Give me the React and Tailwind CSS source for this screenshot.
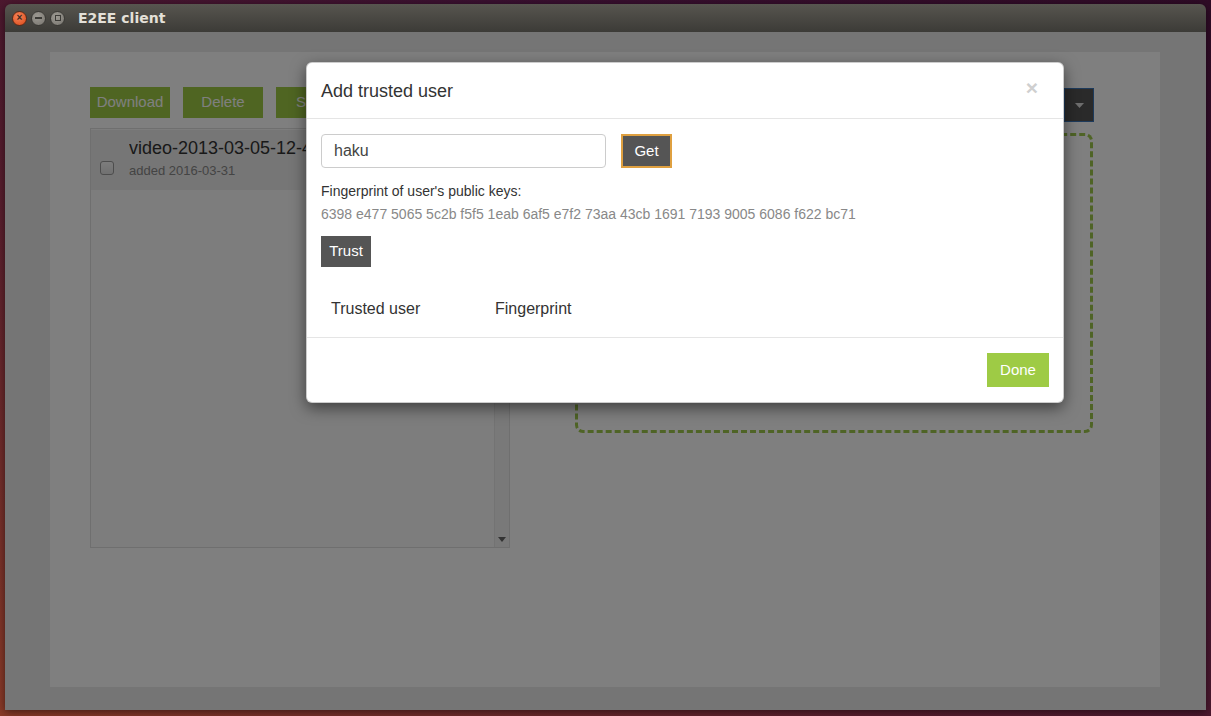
import React from "react";

const font = { fontFamily: '"Liberation Sans", Arial, sans-serif' };

function TitleBar() {
  return (
    <div className="h-[28px] flex items-center bg-[linear-gradient(to_bottom,#57554f,#3c3b37)] rounded-t-[6px] shrink-0">
      <div className="flex items-center ml-[7px] gap-[4px]">
        <div className="w-[15px] h-[15px] rounded-full bg-[radial-gradient(circle_at_40%_35%,#f4855a,#dc4716)] border border-[#5a2a18] flex items-center justify-center text-[#3c2a22] text-[10px] leading-none font-bold">
          ×
        </div>
        <div className="w-[15px] h-[15px] rounded-full bg-[radial-gradient(circle_at_40%_35%,#9d9a93,#77746e)] border border-[#3a3935] flex items-center justify-center">
          <div className="w-[7px] h-[1.5px] bg-[#3c3b37]" />
        </div>
        <div className="w-[15px] h-[15px] rounded-full bg-[radial-gradient(circle_at_40%_35%,#9d9a93,#77746e)] border border-[#3a3935] flex items-center justify-center">
          <div className="w-[6px] h-[6px] border border-[#3c3b37]" />
        </div>
      </div>
      <div className="ml-[13px] font-bold text-[#e4e0d8]" style={{ fontFamily: '"DejaVu Sans", "Liberation Sans", sans-serif', fontSize: 14 }}>
        E2EE client
      </div>
    </div>
  );
}

function GreenBtn({ children }) {
  return (
    <button className="h-[31px] w-[80px] bg-[#9ecb45] text-white text-[15px]">
      {children}
    </button>
  );
}

function Page() {
  return (
    <div className="w-[1110px] h-[635px] bg-white flex pt-[35px] pl-[40px]">
      <div className="w-[420px] flex flex-col">
        <div className="flex gap-[13px]">
          <GreenBtn>Download</GreenBtn>
          <GreenBtn>Delete</GreenBtn>
          <GreenBtn>Share</GreenBtn>
        </div>
        <div className="mt-[10px] w-[420px] h-[420px] border border-[#dedede] bg-[#fbfbfb] flex">
          <div className="flex-1 pt-[1px] overflow-hidden">
            <div className="h-[60px] bg-[#ececec] flex">
              <div className="w-[38px] shrink-0 pl-[9px] pt-[31px]">
                <div className="w-[14px] h-[14px] rounded-[3px] border border-[#9a9a9a] bg-[linear-gradient(#fafafa,#e2e2e2)]" />
              </div>
              <div className="pt-[5px] min-w-0">
                <div className="text-[18px] leading-[26px] text-[#333] whitespace-nowrap overflow-hidden">
                  video-2013-03-05-12-43-51.mp4
                </div>
                <div className="text-[13px] leading-[18px] text-[#888] mt-[1px]">added 2016-03-31</div>
              </div>
            </div>
          </div>
          <div className="w-[15px] bg-[#f3f3f3] border-l border-[#e6e6e6] flex flex-col justify-end items-center pb-[5px]">
            <svg width="8" height="5" viewBox="0 0 8 5">
              <path d="M0 0 H8 L4 5 Z" fill="#666" />
            </svg>
          </div>
        </div>
      </div>
      <div className="ml-[65px] w-[519px] flex flex-col">
        <div className="flex justify-end pt-[1px]">
          <button className="h-[34px] w-[30px] bg-[#555] border border-[#3a74b6] flex items-center justify-center">
            <svg width="9" height="5" viewBox="0 0 9 5">
              <path d="M0 0 H9 L4.5 5 Z" fill="#ddd" />
            </svg>
          </button>
        </div>
        <div className="mt-[11px] w-[518px] h-[300px] border-[3px] border-dashed border-[#9fc84c] rounded-[8px]" />
      </div>
    </div>
  );
}

function Modal() {
  return (
    <div className="absolute top-[30px] left-[301px] w-[758px] bg-white rounded-[6px] border border-black/20 shadow-[0_5px_15px_rgba(0,0,0,0.5)] text-[#333]">
      <div className="h-[56px] border-b border-[#e5e5e5] flex items-center justify-between pl-[14px] pr-[25px]">
        <div className="text-[18px] leading-[20px]">Add trusted user</div>
        <div className="text-[21px] font-bold text-[#cfcfcf] leading-none -mt-[6px]">×</div>
      </div>
      <div className="px-[14px] pt-[15px] pb-[15px]">
        <div className="flex items-center">
          <div className="w-[285px] h-[34px] border border-[#ccc] rounded-[4px] flex items-center pl-[12px] text-[16px] text-[#444]">
            haku
          </div>
          <button className="ml-[15px] w-[51px] h-[34px] bg-[#555] text-white text-[15px] border-2 border-[#dfa040]">
            Get
          </button>
        </div>
        <div className="mt-[13px] text-[14px] leading-[20px] text-[#333]">Fingerprint of user's public keys:</div>
        <div className="mt-[3px] text-[14px] leading-[20px] text-[#888]">
          6398 e477 5065 5c2b f5f5 1eab 6af5 e7f2 73aa 43cb 1691 7193 9005 6086 f622 bc71
        </div>
        <button className="mt-[12px] w-[50px] h-[31px] bg-[#555] text-white text-[15px] block">Trust</button>
        <div className="mt-[29px] h-[26px] flex items-center text-[16px] text-[#333]">
          <div className="w-[174px] pl-[10px]">Trusted user</div>
          <div>Fingerprint</div>
        </div>
      </div>
      <div className="border-t border-[#e5e5e5] px-[14px] py-[15px] flex justify-end">
        <button className="w-[62px] h-[34px] bg-[#9ecb45] text-white text-[15px]">Done</button>
      </div>
    </div>
  );
}

export default function App() {
  return (
    <div
      className="w-[1211px] h-[716px] overflow-hidden pt-[4px] pl-[5px] bg-[linear-gradient(to_top_right,#8a3b28_0%,#5a1f2e_35%,#3a1030_70%,#2f0b26_100%)]"
      style={font}
    >
      <div className="w-[1201px] h-[706px] flex flex-col shadow-[0_2px_8px_rgba(0,0,0,0.5)] rounded-t-[6px]">
        <TitleBar />
        <div className="relative flex-1 bg-[#eaeaea] pt-[20px] pl-[45px]">
          <Page />
          <div className="absolute inset-0 bg-black/50" />
          <Modal />
        </div>
      </div>
    </div>
  );
}
